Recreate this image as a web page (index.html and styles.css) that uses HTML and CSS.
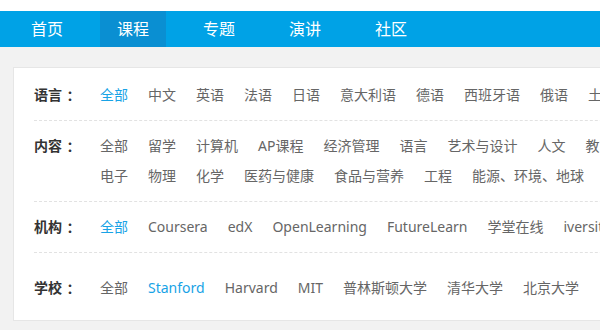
FILE: index.html
```html
<!DOCTYPE html>
<html lang="zh">
<head>
<meta charset="utf-8">
<link rel="stylesheet" href="styles.css">
</head>
<body>
<div class="top"></div>
<nav class="nav">
  <a class="nav-item">首页</a>
  <a class="nav-item active">课程</a>
  <a class="nav-item">专题</a>
  <a class="nav-item">演讲</a>
  <a class="nav-item">社区</a>
</nav>
<main class="main">
  <section class="card">
    <div class="row">
      <span class="label">语言<span class="colon">：</span></span>
      <div class="items">
        <a class="on">全部</a><a>中文</a><a>英语</a><a>法语</a><a>日语</a><a>意大利语</a><a>德语</a><a>西班牙语</a><a>俄语</a><a>土耳其语</a>
      </div>
    </div>
    <div class="row">
      <span class="label">内容<span class="colon">：</span></span>
      <div class="items wrap">
        <a>全部</a><a>留学</a><a>计算机</a><a>AP课程</a><a>经济管理</a><a>语言</a><a>艺术与设计</a><a>人文</a><a>教育</a><br>
        <a>电子</a><a>物理</a><a>化学</a><a>医药与健康</a><a>食品与营养</a><a>工程</a><a>能源、环境、地球</a>
      </div>
    </div>
    <div class="row">
      <span class="label">机构<span class="colon">：</span></span>
      <div class="items">
        <a class="on">全部</a><a>Coursera</a><a>edX</a><a>OpenLearning</a><a>FutureLearn</a><a>学堂在线</a><a>iversity</a>
      </div>
    </div>
    <div class="row last">
      <span class="label">学校<span class="colon">：</span></span>
      <div class="items">
        <a>全部</a><a class="on">Stanford</a><a>Harvard</a><a>MIT</a><a>普林斯顿大学</a><a>清华大学</a><a>北京大学</a>
      </div>
    </div>
  </section>
</main>
</body>
</html>
```
FILE: styles.css
```css
html, body {
  margin: 0;
  padding: 0;
  width: 600px;
  height: 330px;
  overflow: hidden;
  background: #f2f2f2;
  font-family: "Noto Sans", "Noto Sans CJK SC", sans-serif;
}
.top {
  height: 11px;
  background: #fff;
}
.nav {
  display: flex;
  height: 36px;
  background: #00a2e6;
  padding-left: 14px;
  gap: 20px;
}
.nav-item {
  display: block;
  width: 66px;
  line-height: 36px;
  text-align: center;
  color: #fff;
  font-size: 16px;
}
.nav-item.active {
  background: #0a8fd2;
}
.main {
  padding: 20px 0 0 13px;
}
.card {
  background: #fff;
  border: 1px solid #e6e6e6;
  border-right: none;
  padding-top: 2px;
  width: 700px;
  height: 254px;
  box-sizing: border-box;
  white-space: nowrap;
}
.row {
  display: flex;
  align-items: flex-start;
  margin-left: 20px;
  padding: 10px 0;
  border-bottom: 1px dashed #e2e2e2;
  font-size: 14px;
  line-height: 30px;
}
.row.last {
  border-bottom: none;
  padding-top: 20px;
}
.label {
  display: flex;
  align-items: center;
  width: 66px;
  height: 30px;
  flex: none;
  font-weight: bold;
  color: #333;
}
.colon {
  display: block;
  width: 14px;
  height: 30px;
  line-height: 30px;
  text-align: center;
  margin-left: 1px;
  font-family: "Noto Sans CJK TC", sans-serif;
}
.items {
  display: flex;
  gap: 20px;
  color: #666;
}
.items.wrap {
  display: block;
}
.items.wrap a {
  margin-right: 20px;
}
.items a {
  color: #666;
}
.items a.on {
  color: #18a3e6;
}
```
